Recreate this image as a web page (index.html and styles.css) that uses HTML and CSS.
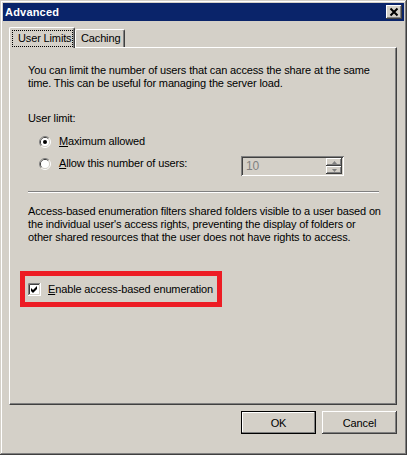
FILE: index.html
```html
<!DOCTYPE html>
<html>
<head>
<meta charset="utf-8">
<link rel="stylesheet" href="styles.css">
</head>
<body>
<div class="window">
  <div class="titlebar">
    <span class="title">Advanced</span>
    <div class="close">
      <svg width="16" height="14" viewBox="0 0 16 14"><path d="M4.5 3.5 L11.5 10.5 M11.5 3.5 L4.5 10.5" stroke="#000" stroke-width="2" fill="none"/></svg>
    </div>
  </div>
  <div class="content">
    <div class="tabs">
      <div class="tab sel"><span class="focus">User Limits</span></div>
      <div class="tab">Caching</div>
    </div>
    <div class="panel">
      <p class="text">You can limit the number of users that can access the share at the same<br>time. This can be useful for managing the server load.</p>
      <p class="text label">User limit:</p>
      <div class="radio-row first">
        <svg class="radio" width="12" height="12" viewBox="0 0 12 12">
          <path d="M2.11 9.89 A5.5 5.5 0 0 1 9.89 2.11" stroke="#808080" fill="none"/>
          <path d="M9.89 2.11 A5.5 5.5 0 0 1 2.11 9.89" stroke="#fff" fill="none"/>
          <path d="M2.82 9.18 A4.5 4.5 0 0 1 9.18 2.82" stroke="#404040" fill="none"/>
          <path d="M9.18 2.82 A4.5 4.5 0 0 1 2.82 9.18" stroke="#D4D0C8" fill="none"/>
          <circle cx="6" cy="6" r="4" fill="#fff"/>
          <circle cx="6" cy="6" r="2" fill="#000"/>
        </svg>
        <span class="rlabel"><u>M</u>aximum allowed</span>
      </div>
      <div class="radio-row second">
        <svg class="radio" width="12" height="12" viewBox="0 0 12 12">
          <path d="M2.11 9.89 A5.5 5.5 0 0 1 9.89 2.11" stroke="#808080" fill="none"/>
          <path d="M9.89 2.11 A5.5 5.5 0 0 1 2.11 9.89" stroke="#fff" fill="none"/>
          <path d="M2.82 9.18 A4.5 4.5 0 0 1 9.18 2.82" stroke="#404040" fill="none"/>
          <path d="M9.18 2.82 A4.5 4.5 0 0 1 2.82 9.18" stroke="#D4D0C8" fill="none"/>
          <circle cx="6" cy="6" r="4" fill="#fff"/>
        </svg>
        <span class="rlabel wide"><u>A</u>llow this number of users:</span>
        <div class="spin">
          <span class="spin-val">10</span>
          <div class="spin-btns">
            <div class="spin-btn"><svg width="5" height="3" viewBox="0 0 5 3"><path d="M2.5 0 L5 3 L0 3 Z" fill="#808080"/></svg></div>
            <div class="spin-btn"><svg width="5" height="3" viewBox="0 0 5 3"><path d="M0 0 L5 0 L2.5 3 Z" fill="#808080"/></svg></div>
          </div>
        </div>
      </div>
      <div class="sep"></div>
      <p class="text para2">Access-based enumeration filters shared folders visible to a user based on<br>the individual user's access rights, preventing the display of folders or<br>other shared resources that the user does not have rights to access.</p>
      <div class="abe">
        <svg class="check" width="13" height="13" viewBox="0 0 13 13">
          <rect x="0" y="0" width="13" height="13" fill="#fff"/>
          <path d="M0.5 12 V0.5 H12" stroke="#808080" fill="none"/>
          <path d="M1.5 11 V1.5 H11" stroke="#404040" fill="none"/>
          <path d="M1 11.5 H11.5 V1" stroke="#D4D0C8" fill="none"/>
          <polygon points="3,5 5,7 9,3 9,6 5,10 3,8" fill="#000"/>
        </svg>
        <span><u>E</u>nable access-based enumeration</span>
      </div>
    </div>
    <div class="buttons">
      <div class="btn default">OK</div>
      <div class="btn">Cancel</div>
    </div>
  </div>
</div>
</body>
</html>
```
FILE: styles.css
```css
body {
  margin: 0;
  font-family: "Liberation Sans", Arial, sans-serif;
  font-size: 11px;
  letter-spacing: -0.14px;
  color: #000;
}
.window {
  width: 407px;
  height: 455px;
  box-sizing: border-box;
  padding: 3px;
  background: #D4D0C8;
  box-shadow: inset -1px -1px #404040, inset 1px 1px #D4D0C8, inset -2px -2px #808080, inset 2px 2px #fff;
  display: flex;
  flex-direction: column;
}
.titlebar {
  height: 18px;
  background: #0A246A;
  display: flex;
  align-items: center;
  justify-content: space-between;
  padding: 0 2px;
  color: #fff;
  font-weight: bold;
  font-size: 11px;
  letter-spacing: 0.2px;
}
.close {
  width: 16px;
  height: 14px;
  background: #D4D0C8;
  box-shadow: inset -1px -1px #404040, inset 1px 1px #fff, inset -2px -2px #808080;
}
.close svg { display: block; }
.content {
  padding: 6px 7px 0 6px;
}
.tabs {
  display: flex;
  align-items: flex-end;
  height: 20px;
}
.tab {
  height: 18px;
  box-sizing: border-box;
  border-top: 1px solid #fff;
  border-left: 1px solid #fff;
  border-right: 1px solid #404040;
  box-shadow: inset -1px 0 #808080;
  border-radius: 2px 2px 0 0;
  padding: 2px 5px 0 5px;
  line-height: 13px;
  width: 50px;
  white-space: nowrap;
}
.tab.sel {
  height: 21px;
  width: 66px;
  margin-bottom: -1px;
  position: relative;
  z-index: 1;
  background: #D4D0C8;
  padding: 2px 1px 0 2px;
}
.focus {
  display: block;
  height: 17px;
  box-sizing: border-box;
  border: 1px dotted #000;
  padding: 1px 0 0 5px;
  line-height: 13px;
}
.panel {
  height: 358px;
  box-sizing: border-box;
  border: 1px solid;
  border-color: #fff #404040 #404040 #fff;
  box-shadow: inset -1px -1px #808080;
  padding: 16px 17px 0 18px;
}
.text {
  margin: 0;
  line-height: 13px;
  white-space: nowrap;
}
.label { margin-top: 22px; }
.radio-row {
  display: flex;
  margin-left: 11px;
}
.radio-row.first {
  align-items: center;
  height: 13px;
  margin-top: 10px;
}
.radio-row.second {
  align-items: flex-start;
  margin-top: 8px;
}
.radio { display: block; flex: none; }
.second .radio { margin-top: 2px; }
.rlabel {
  margin-left: 8px;
  line-height: 13px;
}
.rlabel.wide {
  width: 182px;
  margin-top: 1px;
}
.spin {
  width: 103px;
  height: 20px;
  box-sizing: border-box;
  display: flex;
  padding: 2px;
  background: #D4D0C8;
  box-shadow: inset 1px 1px #808080, inset -1px -1px #fff, inset 2px 2px #404040, inset -2px -2px #D4D0C8;
}
.spin-val {
  flex: 1;
  color: #808080;
  padding-left: 3px;
  line-height: 16px;
  font-size: 12px;
}
.spin-btns {
  width: 16px;
  display: flex;
  flex-direction: column;
}
.spin-btn {
  height: 8px;
  display: flex;
  align-items: center;
  justify-content: center;
  background: #D4D0C8;
  box-shadow: inset -1px -1px #404040, inset 1px 1px #fff, inset -2px -2px #808080;
}
.spin-btn svg { display: block; }
.sep {
  margin-top: 15px;
  height: 0;
  border-top: 1px solid #808080;
  border-bottom: 1px solid #fff;
}
.para2 { margin-top: 12px; }
.abe {
  display: flex;
  align-items: center;
  gap: 7px;
  width: 202px;
  height: 36px;
  box-sizing: border-box;
  border: 5px solid #ED1C24;
  margin: 27px 0 0 -8px;
  padding-left: 3px;
  white-space: nowrap;
}
.check { display: block; flex: none; }
.buttons {
  display: flex;
  justify-content: flex-end;
  gap: 6px;
  margin-top: 6px;
}
.btn {
  width: 75px;
  height: 23px;
  box-sizing: border-box;
  display: flex;
  align-items: center;
  justify-content: center;
  background: #D4D0C8;
  box-shadow: inset -1px -1px #404040, inset 1px 1px #fff, inset -2px -2px #808080;
}
.btn.default {
  border: 1px solid #000;
  box-shadow: inset -1px -1px #808080, inset 1px 1px #fff;
}
```
